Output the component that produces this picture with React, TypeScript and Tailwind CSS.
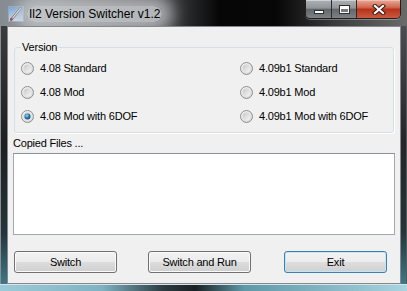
import React from "react";

function AppIcon() {
  return (
    <svg width="16" height="16" viewBox="0 0 16 16" className="shrink-0">
      <defs>
        <linearGradient id="sky" x1="0" y1="0" x2="0" y2="1">
          <stop offset="0" stopColor="#6f9fd0" />
          <stop offset="1" stopColor="#c9def0" />
        </linearGradient>
      </defs>
      <rect x="0.5" y="0.5" width="15" height="15" fill="url(#sky)" stroke="#8aa6c0" />
      <path d="M3 14 L12.5 2.5" stroke="#5b5b5b" strokeWidth="2.4" strokeLinecap="round" />
      <path d="M3 14 L12.5 2.5" stroke="#f2f2f2" strokeWidth="1.1" strokeLinecap="round" />
      <circle cx="3.4" cy="13.2" r="1.4" fill="#c62a2a" />
    </svg>
  );
}

function Radio({ checked }: { checked?: boolean }) {
  return (
    <svg width="13" height="13" viewBox="0 0 13 13" className="shrink-0">
      <defs>
        <linearGradient id="rOut" x1="0" y1="0" x2="1" y2="1">
          <stop offset="0" stopColor="#f7f7f7" />
          <stop offset="1" stopColor="#d2d2d2" />
        </linearGradient>
        <linearGradient id="rIn" x1="0" y1="0" x2="1" y2="1">
          <stop offset="0" stopColor="#c9c9c9" />
          <stop offset="1" stopColor="#f6f6f6" />
        </linearGradient>
        <radialGradient id="rDot" cx="0.4" cy="0.35" r="0.7">
          <stop offset="0" stopColor="#9fe0f8" />
          <stop offset="0.5" stopColor="#2c7fb0" />
          <stop offset="1" stopColor="#0f3f6e" />
        </radialGradient>
      </defs>
      <circle cx="6.5" cy="6.5" r="6" fill="url(#rOut)" stroke="#8e8f8f" />
      <circle cx="6.5" cy="6.5" r="4" fill="url(#rIn)" />
      {checked && <circle cx="6.5" cy="6.5" r="3" fill="url(#rDot)" />}
    </svg>
  );
}

function Option({ label, checked }: { label: string; checked?: boolean }) {
  return (
    <div className="flex items-center gap-[6px] h-[24px]">
      <Radio checked={checked} />
      <span>{label}</span>
    </div>
  );
}

function WinButton({ label, isDefault }: { label: string; isDefault?: boolean }) {
  return (
    <button
      className={
        isDefault
          ? "w-[103px] h-[22px] rounded-[3px] border border-[#3c7fb1] shadow-[inset_0_0_0_1px_#c4e5f6] bg-[linear-gradient(180deg,#f3f3f3_0%,#ececec_50%,#dedede_51%,#d0d0d0_100%)] text-[11px] leading-none tracking-[-0.2px]"
          : "w-[103px] h-[22px] rounded-[3px] border border-[#707070] shadow-[inset_0_0_0_1px_#fbfbfb] bg-[linear-gradient(180deg,#f2f2f2_0%,#ebebeb_50%,#dddddd_51%,#cfcfcf_100%)] text-[11px] leading-none tracking-[-0.2px]"
      }
    >
      {label}
    </button>
  );
}

export default function App() {
  return (
    <div className="w-[407px] h-[291px] flex flex-col overflow-hidden bg-black font-['Liberation_Sans',Arial,sans-serif] text-[11px] text-black">
      {/* Title bar */}
      <div className="h-[26px] flex items-start justify-between pr-[6px] bg-[linear-gradient(90deg,#868c91_0%,#7a8085_12%,#3a3c3e_42%,#060606_54%,#070707_68%,#3a3a3a_82%,#6a6a6a_100%)]">
        <div className="flex items-center gap-[3px] pl-[8px] pt-[6px]">
          <AppIcon />
          <span className="leading-[16px] text-[12px] px-[2px] rounded-full bg-[#d0d2d4]/80 shadow-[0_0_16px_11px_rgba(205,207,209,0.75)]">
            Il2 Version Switcher v1.2
          </span>
        </div>
        <div className="flex h-[19px] rounded-b-[5px] border border-t-0 border-[#202020] overflow-hidden shadow-[0_1px_0_rgba(255,255,255,0.3)]">
          <div className="w-[26px] flex items-end justify-center pb-[4px] border-r border-[#2c2c2c] bg-[linear-gradient(180deg,#aeb2b6_0%,#8f9499_45%,#62676c_52%,#7d8287_100%)] shadow-[inset_0_1px_0_#d0d3d6]">
            <span className="w-[10px] h-[4px] bg-white border border-[#2f2f2f]" />
          </div>
          <div className="w-[25px] flex items-center justify-center border-r border-[#2c2c2c] bg-[linear-gradient(180deg,#aeb2b6_0%,#8f9499_45%,#62676c_52%,#7d8287_100%)] shadow-[inset_0_1px_0_#d0d3d6]">
            <span className="w-[11px] h-[9px] border border-[#2f2f2f] bg-[#777b80] shadow-[inset_0_0_0_1px_#ffffff,inset_0_2px_0_1px_#ffffff]" />
          </div>
          <div className="w-[43px] flex items-center justify-center bg-[linear-gradient(180deg,#e8a896_0%,#d36a52_40%,#b8331c_52%,#c95a40_100%)] shadow-[inset_0_1px_0_#f2c0b2]">
            <svg width="14" height="11" viewBox="0 0 14 11">
              <path d="M3 2 L11 9 M11 2 L3 9" stroke="#3a1a14" strokeWidth="4.2" strokeLinecap="square" />
              <path d="M3 2 L11 9 M11 2 L3 9" stroke="#ffffff" strokeWidth="2.2" strokeLinecap="square" />
            </svg>
          </div>
        </div>
      </div>

      {/* Middle: frames + client */}
      <div className="flex flex-1">
        <div className="w-[7px] border-l border-[#8a8e92] bg-[linear-gradient(180deg,#3a3c3e_0%,#1e1f20_45%,#23353b_80%,#3e7888_100%)]" />
        <div className="w-[394px] flex flex-col border border-[#85898d] bg-[#f0f0f0]">
          <fieldset className="mx-[6px] mt-[14px] h-[92px] px-[6px] rounded-[3px] border border-[#d5dfe5] shadow-[1px_1px_0_#ffffff]">
            <legend className="px-[1px] leading-[13px] tracking-[-0.2px]">Version</legend>
            <div className="grid grid-cols-[219px_1fr] pt-[2px] tracking-[-0.2px]">
              <div className="flex flex-col">
                <Option label="4.08 Standard" />
                <Option label="4.08 Mod" />
                <Option label="4.08 Mod with 6DOF" checked />
              </div>
              <div className="flex flex-col">
                <Option label="4.09b1 Standard" />
                <Option label="4.09b1 Mod" />
                <Option label="4.09b1 Mod with 6DOF" />
              </div>
            </div>
          </fieldset>

          <div className="mt-[4px] ml-[5px] leading-[13px] tracking-[-0.2px]">Copied Files ...</div>
          <div className="mt-[3px] mx-[5px] h-[82px] bg-white border border-[#a3a8ae] border-t-[#8d9298]" />

          <div className="flex mt-[16px] ml-[6px]">
            <WinButton label="Switch" />
            <div className="ml-[31px]">
              <WinButton label="Switch and Run" />
            </div>
            <div className="ml-[33px]">
              <WinButton label="Exit" isDefault />
            </div>
          </div>
        </div>
        <div className="w-[6px] border-r border-[#55595c] bg-[linear-gradient(180deg,#4a4c4e_0%,#242526_45%,#23353b_80%,#3e7888_100%)]" />
      </div>

      {/* Bottom frame */}
      <div className="h-[7px] border-t border-[#d8e4e8] bg-[linear-gradient(90deg,#9ccbd8_0%,#7fb3c3_25%,#2c3c42_40%,#1a2124_48%,#5f98a8_60%,#a9d4e0_100%)]" />
    </div>
  );
}
